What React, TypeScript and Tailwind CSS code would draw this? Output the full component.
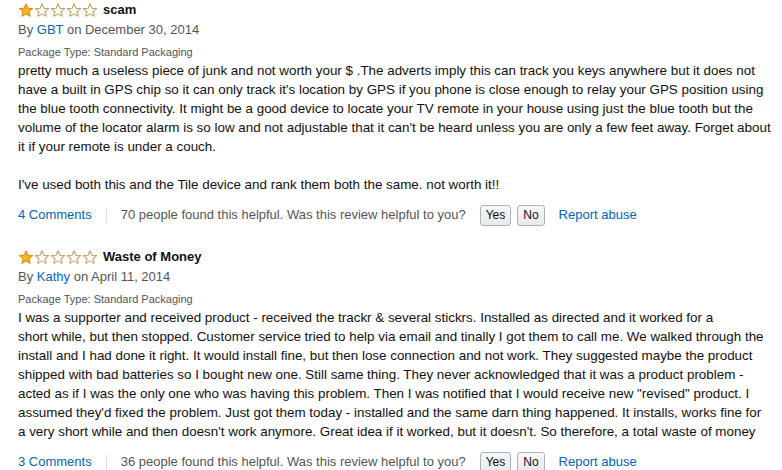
import React from 'react';

type Review = {
  title: string;
  author: string;
  date: string;
  lines: string[];
  comments: number;
  helpful: number;
};

const reviews: Review[] = [
  {
    title: 'scam',
    author: 'GBT',
    date: 'December 30, 2014',
    lines: [
      'pretty much a useless piece of junk and not worth your $ .The adverts imply this can track you keys anywhere but it does not',
      "have a built in GPS chip so it can only track it's location by GPS if you phone is close enough to relay your GPS position using",
      'the blue tooth connectivity. It might be a good device to locate your TV remote in your house using just the blue tooth but the',
      "volume of the locator alarm is so low and not adjustable that it can't be heard unless you are only a few feet away. Forget about",
      'it if your remote is under a couch.',
      '',
      "I've used both this and the Tile device and rank them both the same. not worth it!!",
    ],
    comments: 4,
    helpful: 70,
  },
  {
    title: 'Waste of Money',
    author: 'Kathy',
    date: 'April 11, 2014',
    lines: [
      'I was a supporter and received product - received the trackr & several stickrs. Installed as directed and it worked for a',
      'short while, but then stopped. Customer service tried to help via email and tinally I got them to call me. We walked through the',
      'install and I had done it right. It would install fine, but then lose connection and not work. They suggested maybe the product',
      'shipped with bad batteries so I bought new one. Still same thing. They never acknowledged that it was a product problem -',
      'acted as if I was the only one who was having this problem. Then I was notified that I would receive new "revised" product. I',
      "assumed they'd fixed the problem. Just got them today - installed and the same darn thing happened. It installs, works fine for",
      "a very short while and then doesn't work anymore. Great idea if it worked, but it doesn't. So therefore, a total waste of money",
    ],
    comments: 3,
    helpful: 36,
  },
];

const STAR = 'M7.5 0.8 L9.4 5.2 L14.2 5.6 L10.55 8.75 L11.65 13.4 L7.5 10.9 L3.35 13.4 L4.45 8.75 L0.8 5.6 L5.6 5.2 Z';

function Star({ filled }: { filled: boolean }) {
  return (
    <svg width="16" height="15" viewBox="-0.5 0 16 15" className="block">
      {filled ? (
        <path d={STAR} fill="#f8b51c" stroke="#d48a17" strokeWidth="1" strokeLinejoin="round" />
      ) : (
        <path d={STAR} fill="#ffffff" stroke="#c6a56c" strokeWidth="1.1" strokeLinejoin="round" />
      )}
    </svg>
  );
}

function VoteButton({ label }: { label: string }) {
  return (
    <button className="h-[21px] px-[5px] rounded-[3px] border border-[#adb1b8] bg-gradient-to-b from-[#f7f8fa] to-[#e7e9ec] text-[12px] leading-[19px] text-[#111]">
      {label}
    </button>
  );
}

function ReviewBlock({ review }: { review: Review }) {
  return (
    <div>
      {/* title row */}
      <div className="flex items-center h-[20px]">
        <div className="flex">
          {[0, 1, 2, 3, 4].map((i) => (
            <Star key={i} filled={i === 0} />
          ))}
        </div>
        <span className="ml-[5px] font-bold text-[13px] text-[#111]">{review.title}</span>
      </div>
      <div className="text-[13px] leading-[19px] text-[#555]">
        By <a className="text-[#0066c0]">{review.author}</a> on {review.date}
      </div>
      <div className="mt-[5px] text-[11px] leading-[16px] text-[#555]">Package Type: Standard Packaging</div>
      <div className="mt-[1px] text-[13.4px] leading-[19px] text-[#111] whitespace-nowrap">
        {review.lines.map((line, i) => (
          <span key={i} className="block h-[19px]">
            {line}
          </span>
        ))}
      </div>
      {/* footer row */}
      <div className="mt-[9px] flex items-center h-[24px] text-[13px] text-[#555]">
        <a className="text-[#0066c0]">{review.comments} Comments</a>
        <span className="mx-[14px] w-px h-[15px] bg-[#ddd]" />
        <span>{review.helpful} people found this helpful. Was this review helpful to you?</span>
        <div className="ml-[14px] flex gap-[6px]">
          <VoteButton label="Yes" />
          <VoteButton label="No" />
        </div>
        <a className="ml-[14px] text-[#0066c0]">Report abuse</a>
      </div>
    </div>
  );
}

export default function App() {
  return (
    <div className="w-[782px] h-[470px] overflow-hidden bg-white px-[18px] font-['Liberation_Sans',Arial,sans-serif]">
      <div className="flex flex-col gap-[20px]">
        {reviews.map((r) => (
          <ReviewBlock key={r.title} review={r} />
        ))}
      </div>
    </div>
  );
}
